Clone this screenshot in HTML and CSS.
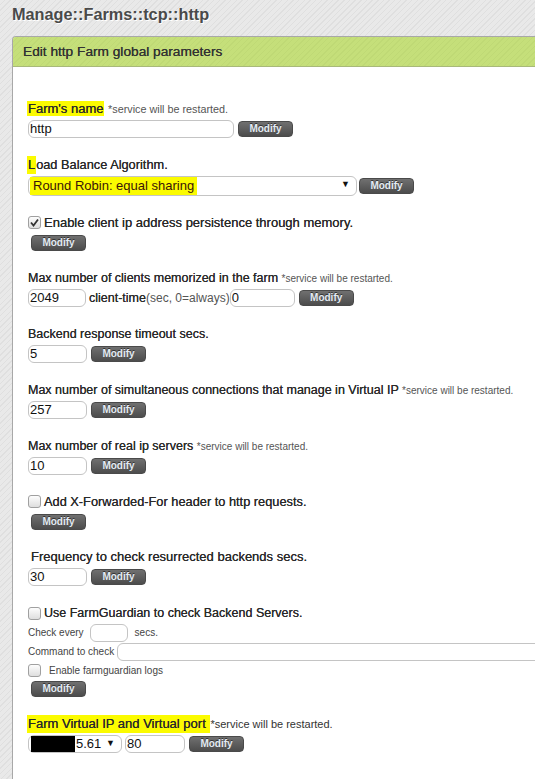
FILE: index.html
```html
<!DOCTYPE html>
<html>
<head>
<meta charset="utf-8">
<link rel="stylesheet" href="styles.css">
</head>
<body>
<h1 class="page-title">Manage::Farms::tcp::http</h1>
<div class="box">
  <div class="box-head">Edit http Farm global parameters</div>
  <div class="box-body">

    <div class="field">
      <div class="label"><span class="hl">Farm's name</span> <span class="note big">*service will be restarted.</span></div>
      <div class="row">
        <span class="input w205">http</span>
        <button class="btn">Modify</button>
      </div>
    </div>

    <div class="field">
      <div class="label mid"><span class="hl hl-tall">L</span>oad Balance Algorithm.</div>
      <div class="row row-select">
        <span class="select w328"><span class="hl-sel">Round Robin: equal sharing</span><span class="arrow">▼</span></span>
        <button class="btn btn-near">Modify</button>
      </div>
    </div>

    <div class="field">
      <div class="label check-label"><span class="cb checked"><svg viewBox="0 0 13 13" width="13" height="13"><path d="M3 6.5 L5.5 9.5 L10 3.5" fill="none" stroke="#333" stroke-width="1.8"/></svg></span>Enable client ip address persistence through memory.</div>
      <div class="row">
        <button class="btn btn-indent">Modify</button>
      </div>
    </div>

    <div class="field">
      <div class="label tight">Max number of clients memorized in the farm <span class="note">*service will be restarted.</span></div>
      <div class="row">
        <span class="input w57">2049</span>
        <span class="inline-label">client-time<span class="light">(sec, 0=always)</span></span><span class="input w64">0</span>
        <button class="btn">Modify</button>
      </div>
    </div>

    <div class="field">
      <div class="label tight">Backend response timeout secs.</div>
      <div class="row">
        <span class="input w58">5</span>
        <button class="btn">Modify</button>
      </div>
    </div>

    <div class="field">
      <div class="label tight">Max number of simultaneous connections that manage in Virtual IP <span class="note">*service will be restarted.</span></div>
      <div class="row">
        <span class="input w58">257</span>
        <button class="btn">Modify</button>
      </div>
    </div>

    <div class="field">
      <div class="label tight">Max number of real ip servers <span class="note">*service will be restarted.</span></div>
      <div class="row">
        <span class="input w58">10</span>
        <button class="btn">Modify</button>
      </div>
    </div>

    <div class="field">
      <div class="label check-label mid"><span class="cb"></span>Add X-Forwarded-For header to http requests.</div>
      <div class="row">
        <button class="btn btn-indent">Modify</button>
      </div>
    </div>

    <div class="field">
      <div class="label indent3">Frequency to check resurrected backends secs.</div>
      <div class="row">
        <span class="input w58">30</span>
        <button class="btn">Modify</button>
      </div>
    </div>

    <div class="field">
      <div class="label check-label tight fg-label"><span class="cb"></span>Use FarmGuardian to check Backend Servers.</div>
      <div class="small-row">
        <span class="small">Check every</span><span class="input small-input w37"></span><span class="small secs">secs.</span>
      </div>
      <div class="small-row">
        <span class="small">Command to check</span><span class="input small-input cmd wcmd"></span>
      </div>
      <div class="small-row">
        <span class="cb"></span><span class="small logs">Enable farmguardian logs</span>
      </div>
      <div class="row row-btn">
        <button class="btn btn-indent">Modify</button>
      </div>
    </div>

    <div class="field">
      <div class="label"><span class="hl hl-tall">Farm Virtual IP and Virtual port </span><span class="note dark">*service will be restarted.</span></div>
      <div class="row">
        <span class="select w93"><span class="redact"></span><span class="ip">5.61</span><span class="arrow">▼</span></span>
        <span class="input w59 gap3">80</span>
        <button class="btn">Modify</button>
      </div>
    </div>

  </div>
</div>
</body>
</html>
```
FILE: styles.css
```css
html, body {
  margin: 0;
  padding: 0;
  overflow: hidden;
}
body {
  width: 535px;
  height: 779px;
  font-family: "Liberation Sans", Arial, sans-serif;
  color: #333;
  background-color: #e9e9e9;
  background-image: repeating-linear-gradient(135deg, #e9e9e9 0px, #e9e9e9 3px, #dfdfdf 3px, #dfdfdf 4px);
}
.page-title {
  margin: 0;
  padding: 4px 0 0 12px;
  height: 36px;
  box-sizing: border-box;
  font-size: 16.3px;
  line-height: 20px;
  font-weight: bold;
  color: #4a4a4a;
  text-shadow: 1px 1px 0 #fff;
}
.box {
  margin-left: 12px;
  width: 600px;
  border-left: 1px solid #a8a8a8;
  border-top: 1px solid #a8a8a8;
  border-top-left-radius: 4px;
  background: #fff;
  height: 760px;
}
.box-head {
  height: 30px;
  box-sizing: border-box;
  padding-left: 10px;
  line-height: 29px;
  font-size: 13.7px;
  color: #333;
  border-bottom: 1px solid #a8b97a;
  border-top-left-radius: 3px;
  background-color: #c5df7a;
  background-image: repeating-linear-gradient(135deg, #c5df7a 0px, #c5df7a 3px, #bfd975 3px, #bfd975 4px);
  text-shadow: 0 0 0.4px #333;
}
.box-body {
  padding: 34px 0 0 15px;
}
.field {
  margin-bottom: 18.8px;
}
.label {
  height: 16px;
  line-height: 16px;
  font-size: 13px;
  color: #2a2a2a;
  white-space: nowrap;
  margin-bottom: 3px;
  text-shadow: 0 0 0.3px #333;
}
.label.tight {
  font-size: 12.5px;
}
.label.mid {
  font-size: 12.8px;
}
.label.fg-label {
  margin-bottom: 2px;
}
.indent3 {
  padding-left: 3px;
}
.hl {
  background: #fbfb00;
  margin-left: -1px;
  padding: 0 1px 0 1px;
}
.hl-tall {
  padding-top: 1px;
  padding-bottom: 2px;
}
.note {
  font-size: 10px;
  color: #555;
  text-shadow: none;
}
.note.big {
  font-size: 10.8px;
}
.note.dark {
  font-size: 11px;
  color: #333;
}
.check-label {
  display: flex;
  align-items: center;
}
.cb {
  display: inline-block;
  width: 13px;
  height: 13px;
  box-sizing: border-box;
  border: 1px solid #a0a0a0;
  border-radius: 3px;
  background: linear-gradient(#fdfdfd, #dedede);
  margin-right: 3px;
  position: relative;
  flex: none;
}
.cb svg {
  position: absolute;
  left: -1px;
  top: -1px;
}
.row {
  display: flex;
  align-items: center;
  height: 18px;
}
.row-select {
  height: 20px;
}
.row-btn {
  height: 16px;
  margin-top: 1px;
}
.input {
  display: inline-block;
  height: 18px;
  box-sizing: border-box;
  border: 1px solid #c4c4c4;
  border-radius: 6px;
  background: #fff;
  font-size: 13px;
  line-height: 16px;
  color: #111;
  padding-left: 1px;
  flex: none;
}
.w205 { width: 206px; }
.w57 { width: 58px; }
.w58 { width: 59px; }
.w59 { width: 60px; }
.w64 { width: 65px; }
.w37 { width: 38px; }
.wcmd { width: 440px; }
.gap3 { margin-left: 3px; }
.select {
  display: flex;
  align-items: center;
  height: 20px;
  box-sizing: border-box;
  border: 1px solid #c4c4c4;
  border-radius: 6px;
  background: #fff;
  font-size: 13px;
  padding-left: 1px;
  position: relative;
  flex: none;
}
.w328 { width: 329px; }
.w93 { width: 94px; height: 18px; }
.hl-sel {
  background: #fbfb00;
  color: #3a1408;
  padding: 1px 3px 1px 3px;
  line-height: 16px;
}
.arrow {
  position: absolute;
  right: 6px;
  top: 2px;
  font-size: 9px;
  color: #111;
}
.redact {
  display: inline-block;
  width: 44px;
  height: 16px;
  background: #000;
  margin-left: 1px;
}
.ip {
  color: #111;
  margin-left: 1px;
}
.inline-label {
  font-size: 12.5px;
  color: #2a2a2a;
  margin-left: 3px;
  text-shadow: 0 0 0.3px #333;
}
.light {
  font-size: 12px;
  color: #555;
  text-shadow: none;
}
.btn {
  margin-left: 4px;
  width: 55px;
  height: 16px;
  box-sizing: border-box;
  padding: 0;
  border: 1px solid #4a4a4a;
  border-radius: 4px;
  background: linear-gradient(#707070, #4c4c4c);
  color: #e4ecf4;
  font-family: "Liberation Sans", Arial, sans-serif;
  font-size: 10px;
  font-weight: bold;
  line-height: 14px;
  text-shadow: 0 -1px 0 #333;
  flex: none;
}
.btn-near {
  margin-left: 2px;
}
.btn-indent {
  margin-left: 3px;
}
.small-row {
  display: flex;
  align-items: center;
  height: 19px;
}
.small {
  font-size: 10px;
  color: #444;
}
.small-input {
  height: 18px;
  margin-left: 6px;
}
.small-input.cmd {
  margin-left: 3px;
}
.secs {
  margin-left: 7px;
}
.logs {
  margin-left: 5px;
}
```
